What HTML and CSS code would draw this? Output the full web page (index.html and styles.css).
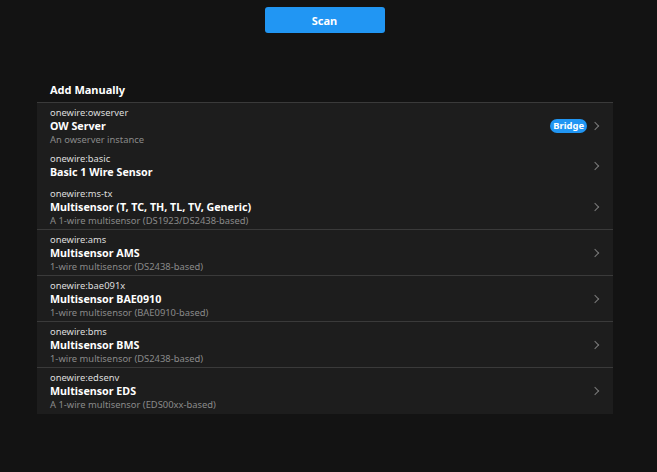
FILE: index.html
```html
<!doctype html>
<html>
	<head>
		<title>Add Manually</title>
		<link rel="stylesheet" href="styles.css">
	</head>
	<body>

		<div id="toolbar">
			<button class="scan-btn">Scan</button>
		</div>

		<div id="manual">
			<h3 class="section-title">Add Manually</h3>
			<ul class="device-list">
				<li class="device">
					<div class="device-text">
						<div class="device-id">onewire:owserver</div>
						<div class="device-name">OW Server</div>
						<div class="device-desc">An owserver instance</div>
					</div>
					<span class="badge">Bridge</span>
					<span class="chevron"></span>
				</li>
				<li class="device short">
					<div class="device-text">
						<div class="device-id">onewire:basic</div>
						<div class="device-name">Basic 1 Wire Sensor</div>
					</div>
					<span class="chevron"></span>
				</li>
				<li class="device sep">
					<div class="device-text">
						<div class="device-id">onewire:ms-tx</div>
						<div class="device-name">Multisensor (T, TC, TH, TL, TV, Generic)</div>
						<div class="device-desc">A 1-wire multisensor (DS1923/DS2438-based)</div>
					</div>
					<span class="chevron"></span>
				</li>
				<li class="device sep">
					<div class="device-text">
						<div class="device-id">onewire:ams</div>
						<div class="device-name">Multisensor AMS</div>
						<div class="device-desc">1-wire multisensor (DS2438-based)</div>
					</div>
					<span class="chevron"></span>
				</li>
				<li class="device sep">
					<div class="device-text">
						<div class="device-id">onewire:bae091x</div>
						<div class="device-name">Multisensor BAE0910</div>
						<div class="device-desc">1-wire multisensor (BAE0910-based)</div>
					</div>
					<span class="chevron"></span>
				</li>
				<li class="device sep">
					<div class="device-text">
						<div class="device-id">onewire:bms</div>
						<div class="device-name">Multisensor BMS</div>
						<div class="device-desc">1-wire multisensor (DS2438-based)</div>
					</div>
					<span class="chevron"></span>
				</li>
				<li class="device last">
					<div class="device-text">
						<div class="device-id">onewire:edsenv</div>
						<div class="device-name">Multisensor EDS</div>
						<div class="device-desc">A 1-wire multisensor (EDS00xx-based)</div>
					</div>
					<span class="chevron"></span>
				</li>
			</ul>
		</div>

	</body>
</html>
```

FILE: styles.css
```css
body {
	margin: 0;
	background: #131313;
	color: #ffffff;
	font-family: "Noto Sans", "Open Sans", sans-serif;
}

#toolbar {
	display: flex;
	justify-content: center;
	padding: 7px 8px 0 0;
}

.scan-btn {
	width: 120px;
	height: 26px;
	background: #2196f3;
	color: #ffffff;
	border: none;
	border-radius: 3px;
	font-family: inherit;
	font-size: 11px;
	font-weight: bold;
}

#manual {
	margin: 49px 44px 0 37px;
}

.section-title {
	font-size: 11px;
	font-weight: bold;
	margin: 0;
	padding: 0 0 5px 13px;
	line-height: 15px;
}

.device-list {
	list-style: none;
	margin: 0;
	padding: 0;
	background: #1d1d1d;
	border-top: 1px solid #3a3a3a;
}

.device {
	display: flex;
	align-items: center;
	padding: 3px 0 3px 13px;
}

.device-text {
	flex: 1;
	min-width: 0;
}

.device-id {
	font-size: 9.4px;
	line-height: 13px;
	color: #dddddd;
}

.device-name {
	font-size: 10.7px;
	font-weight: bold;
	line-height: 14px;
}

.device-desc {
	font-size: 9.4px;
	line-height: 13px;
	color: #8a8a8a;
}

.short {
	padding-bottom: 5px;
}

.sep {
	padding-bottom: 2px;
	border-bottom: 1px solid #3a3a3a;
}

.last {
	padding-bottom: 3px;
	box-shadow: 0 1px 0 #3a3a3a;
}

.badge {
	background: #2196f3;
	color: #ffffff;
	font-size: 9.4px;
	font-weight: bold;
	line-height: 14px;
	padding: 0 3px;
	border-radius: 7px;
}

.chevron {
	width: 5px;
	height: 5px;
	border-top: 1.5px solid #7a7a7a;
	border-right: 1.5px solid #7a7a7a;
	transform: rotate(45deg);
	margin: 0 15px 0 5px;
}
```
